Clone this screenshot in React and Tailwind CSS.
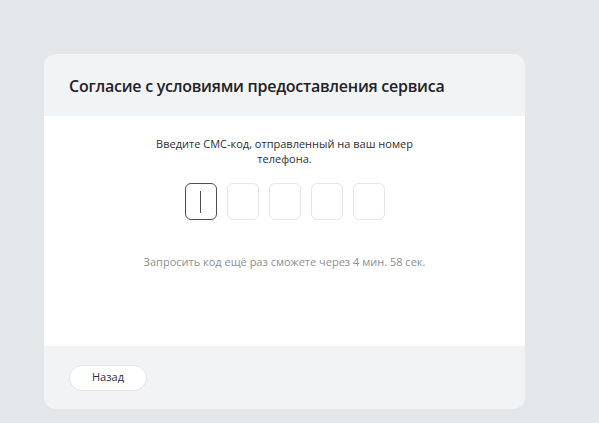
// ===== Imports =====
import React, { useState } from "react";

// ===== Component =====
const App = () => {
  const [code] = useState(["", "", "", "", ""]);

  return (
    <div
      className="min-h-screen w-full bg-[#e4e7ea] pt-[54px] pl-[44px]"
      style={{ fontFamily: '"Open Sans", "Noto Sans", sans-serif' }}
    >
      <div className="w-[481px] h-[355px] rounded-[12px] bg-[#f2f3f5] overflow-hidden flex flex-col">
        {/* Header */}
        <div className="h-[62px] flex items-center px-[25px] pt-[2px]">
          <h2 className="text-[16px] font-semibold text-[#1f2226] tracking-[-0.25px]">
            Согласие с условиями предоставления сервиса
          </h2>
        </div>

        {/* Body */}
        <div className="h-[230px] bg-white flex flex-col items-center pt-[20px]">
          <p className="w-[270px] text-center text-[11px] leading-[15px] text-[#2b2f33]">
            Введите СМС-код, отправленный на ваш номер телефона.
          </p>

          <div className="flex gap-[10px] mt-[17px]">
            {code.map((v, i) => (
              <div
                key={i}
                className={`w-[32px] h-[37px] rounded-[6px] border flex items-center justify-center ${
                  i === 0 ? "border-[#4a4d52]" : "border-[#e3e5e8]"
                }`}
              >
                {i === 0 && <span className="w-px h-[22px] bg-[#4a4d52]" />}
              </div>
            ))}
          </div>

          <p className="mt-[34px] text-[11px] text-[#8c8f93]">
            Запросить код ещё раз сможете через 4 мин. 58 сек.
          </p>
        </div>

        {/* Footer */}
        <div className="flex-1 flex items-center px-[25px]">
          <button className="w-[78px] h-[26px] rounded-full bg-white border border-[#e3e5e8] text-[11px] text-[#2b2f33]">
            Назад
          </button>
        </div>
      </div>
    </div>
  );
};

export default App;
